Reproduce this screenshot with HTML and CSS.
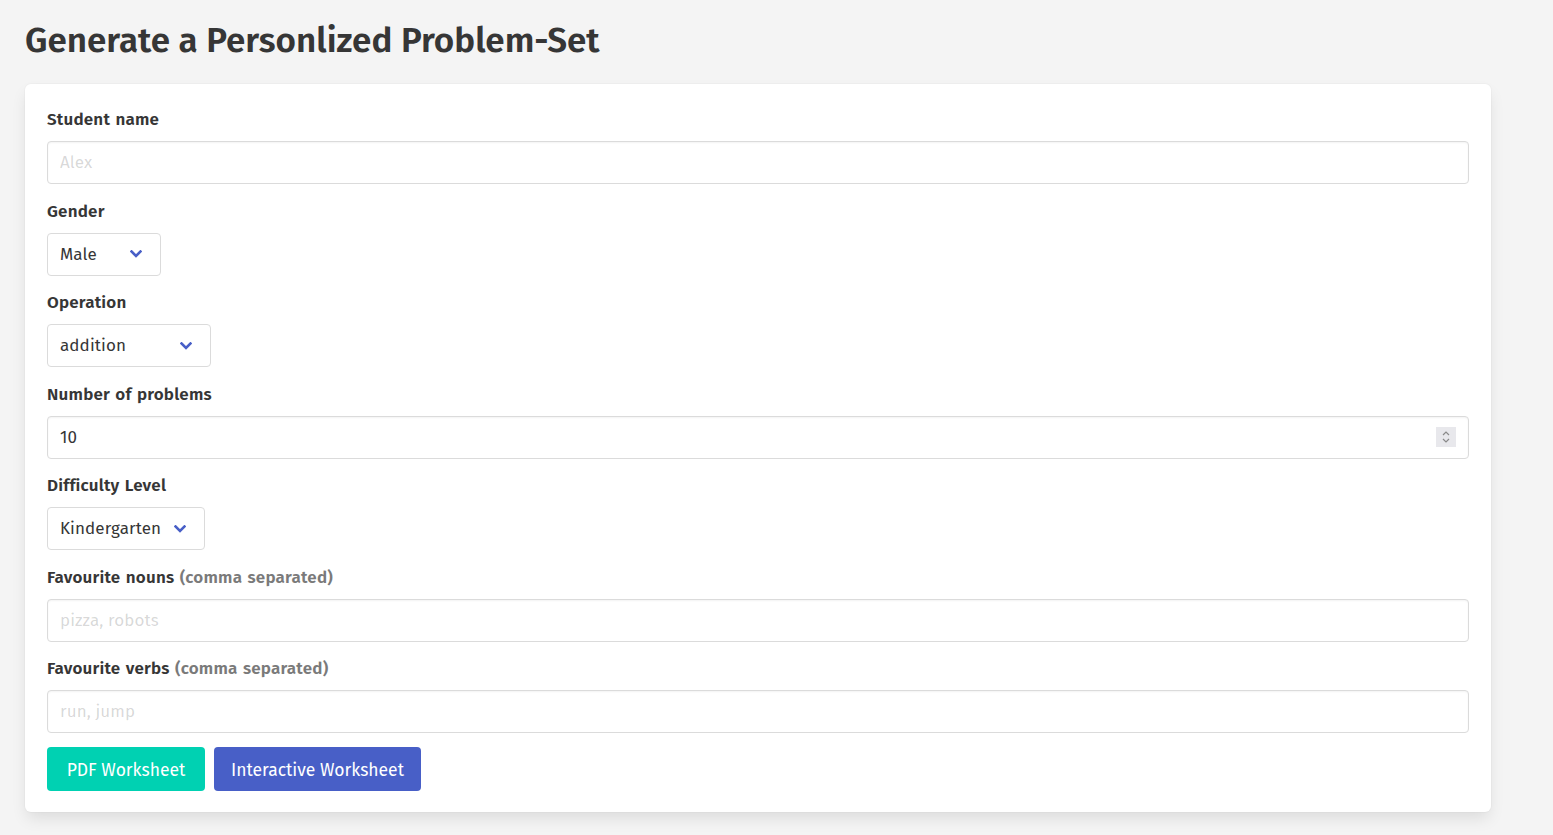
FILE: index.html
```html
<!DOCTYPE html>
<html lang="en">
<head>
<meta charset="utf-8">
<title>Generate a Personlized Problem-Set</title>
<link rel="stylesheet" href="styles.css">
</head>
<body>
<main class="page">
  <h1 class="title">Generate a Personlized Problem-Set</h1>
  <form class="box">
    <div class="field">
      <label class="label">Student name</label>
      <input class="input" type="text" placeholder="Alex">
    </div>
    <div class="field">
      <label class="label">Gender</label>
      <div class="select select-gender">
        <span class="select-value">Male</span>
        <svg class="chevron" viewBox="0 0 12 8" width="12" height="8"><path d="M1.5 1.5 L6 6 L10.5 1.5" fill="none" stroke="#485fc7" stroke-width="2.6" stroke-linecap="square"/></svg>
      </div>
    </div>
    <div class="field">
      <label class="label">Operation</label>
      <div class="select select-operation">
        <span class="select-value">addition</span>
        <svg class="chevron" viewBox="0 0 12 8" width="12" height="8"><path d="M1.5 1.5 L6 6 L10.5 1.5" fill="none" stroke="#485fc7" stroke-width="2.6" stroke-linecap="square"/></svg>
      </div>
    </div>
    <div class="field">
      <label class="label">Number of problems</label>
      <div class="input number-input">
        <span>10</span>
        <span class="spinner">
          <svg viewBox="0 0 10 16" width="10" height="16"><path d="M2 6 L5 3 L8 6 M2 10 L5 13 L8 10" fill="none" stroke="#8a8a8a" stroke-width="1.2"/></svg>
        </span>
      </div>
    </div>
    <div class="field">
      <label class="label">Difficulty Level</label>
      <div class="select select-difficulty">
        <span class="select-value">Kindergarten</span>
        <svg class="chevron" viewBox="0 0 12 8" width="12" height="8"><path d="M1.5 1.5 L6 6 L10.5 1.5" fill="none" stroke="#485fc7" stroke-width="2.6" stroke-linecap="square"/></svg>
      </div>
    </div>
    <div class="field">
      <label class="label">Favourite nouns <span class="muted">(comma separated)</span></label>
      <input class="input" type="text" placeholder="pizza, robots">
    </div>
    <div class="field">
      <label class="label">Favourite verbs <span class="muted">(comma separated)</span></label>
      <input class="input" type="text" placeholder="run, jump">
    </div>
    <div class="buttons">
      <button type="button" class="button is-primary">PDF Worksheet</button>
      <button type="button" class="button is-link">Interactive Worksheet</button>
    </div>
  </form>
</main>
</body>
</html>
```
FILE: styles.css
```css
* { box-sizing: border-box; }
html, body { margin: 0; padding: 0; }
body {
  background: #f4f4f4;
  font-family: "Fira Sans", "Open Sans", "Noto Sans", sans-serif;
  color: #363636;
  font-size: 17px;
}
.page {
  padding: 18px 62px 22px 25px;
}
.title {
  margin: 0 0 21px 0;
  font-size: 35px;
  line-height: 45px;
  font-weight: 600;
  color: #363636;
}
.box {
  background: #fff;
  border-radius: 6px;
  padding: 22px 22px 21px;
  box-shadow: 0 8px 16px -2px rgba(10,10,10,0.1), 0 0 0 1px rgba(10,10,10,0.02);
}
.field { margin-bottom: 13.5px; }
.label {
  display: block;
  font-size: 17px;
  line-height: 27px;
  font-weight: 600;
  color: #363636;
  margin-bottom: 8px;
  letter-spacing: 0.2px;
  word-spacing: 1px;
}
.muted { color: #7a7a7a; }
.input {
  display: flex;
  align-items: center;
  width: 100%;
  height: 43px;
  padding: 0 12px;
  border: 1px solid #dbdbdb;
  border-radius: 4px;
  background: #fff;
  box-shadow: inset 0 1px 2px rgba(10,10,10,0.05);
  font-family: inherit;
  font-size: 17px;
  color: #363636;
  outline: none;
  letter-spacing: 0.1px;
}
.input::placeholder { color: rgba(54,54,54,0.2); }
.number-input { justify-content: space-between; padding-right: 12px; }
.spinner {
  display: flex;
  align-items: center;
  justify-content: center;
  width: 20px;
  height: 20px;
  background: #e8e8ec;
}
.select {
  display: inline-flex;
  align-items: center;
  justify-content: space-between;
  height: 43px;
  padding: 0 18px 0 12px;
  border: 1px solid #dbdbdb;
  border-radius: 4px;
  background: #fff;
  font-size: 17px;
  color: #363636;
  letter-spacing: 0.1px;
}
.select-gender { width: 114px; }
.select-operation { width: 164px; }
.select-difficulty { width: 158px; }
.chevron { display: block; }
.buttons {
  display: flex;
  gap: 9px;
}
.button {
  height: 44px;
  padding: 3px 0 0;
  border: none;
  border-radius: 4px;
  font-family: inherit;
  font-size: 17.5px;
  color: #fff;
  cursor: pointer;
}
.is-primary { background: #00d1b2; width: 158px; }
.is-link { background: #485fc7; width: 207px; }
```
